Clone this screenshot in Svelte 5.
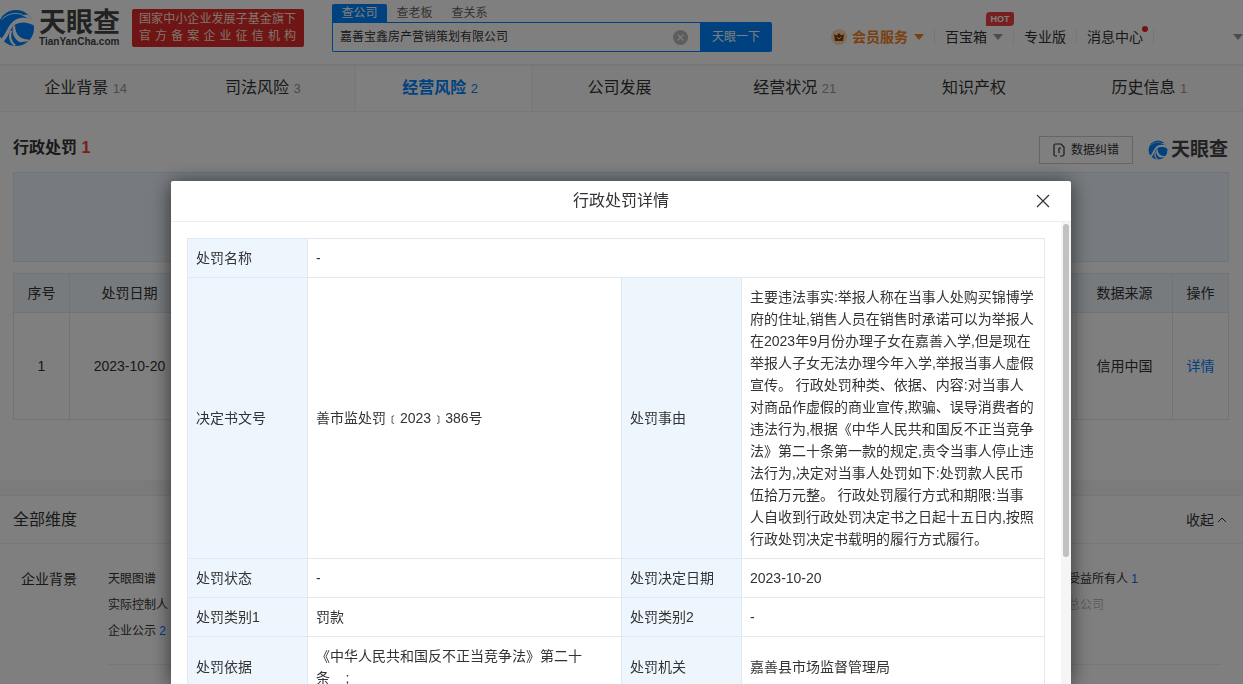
<script>
  let keyword = $state("嘉善宝鑫房产营销策划有限公司");
  let open = $state(true);

  const tabs = [
    { name: "企业背景", count: 14 },
    { name: "司法风险", count: 3 },
    { name: "经营风险", count: 2, active: true },
    { name: "公司发展" },
    { name: "经营状况", count: 21 },
    { name: "知识产权" },
    { name: "历史信息", count: 1 },
  ];

  const reason =
    "主要违法事实:举报人称在当事人处购买锦博学府的住址,销售人员在销售时承诺可以为举报人在2023年9月份办理子女在嘉善入学,但是现在举报人子女无法办理今年入学,举报当事人虚假宣传。 行政处罚种类、依据、内容:对当事人对商品作虚假的商业宣传,欺骗、误导消费者的违法行为,根据《中华人民共和国反不正当竞争法》第二十条第一款的规定,责令当事人停止违法行为,决定对当事人处罚如下:处罚款人民币伍拾万元整。 行政处罚履行方式和期限:当事人自收到行政处罚决定书之日起十五日内,按照行政处罚决定书载明的履行方式履行。";

  const rows = [
    ["决定书文号", "善市监处罚﹝2023﹞386号", "处罚事由", reason],
    ["处罚状态", "-", "处罚决定日期", "2023-10-20"],
    ["处罚类别1", "罚款", "处罚类别2", "-"],
    [
      "处罚依据",
      "《中华人民共和国反不正当竞争法》第二十条\u00a0\u00a0\u00a0\u00a0;",
      "处罚机关",
      "嘉善县市场监督管理局",
    ],
  ];
</script>

{#snippet swirl()}
  <svg class="swirl" viewBox="0 0 40 40" aria-hidden="true">
    <circle cx="20" cy="20" r="19" fill="#0084ff" />
    <g fill="#fff">
      <path d="M40 14C34 9 26 8 20 11 12 15 11 24 4 32l2 3C13 29 13 21 18 17c6-4 14-4 22 1z" />
      <path d="M17 18c-2 7 1 14 7 17l10-1-1-2C25 32 19 27 19 17z" />
      <path d="M14 23c-3 6-1 12 4 16l2-1c-5-4-6-9-4-15z" />
      <path d="M33 6l8 10-3-1C35 11 31 8 26 7c2-1 4-1 7-1z" />
    </g>
    <path fill="none" stroke="#fff" d="M5 11C11 5 19 3 27 6" />
  </svg>
{/snippet}

<div class="page">
  <header class="header">
    <a class="logo" href="#home">
      {@render swirl()}
      <span class="logo-text">
        <b>天眼查</b>
        <small>TianYanCha.com</small>
      </span>
    </a>
    <div class="badge">
      <span>国家中小企业发展子基金旗下</span>
      <span>官方备案企业征信机构</span>
    </div>
    <div class="search">
      <div class="search-tabs">
        <button class="on">查公司</button>
        <button>查老板</button>
        <button>查关系</button>
      </div>
      <div class="search-row">
        <div class="search-box">
          <input type="text" aria-label="搜索" bind:value={keyword} />
          <button class="clear" aria-label="清除" onclick={() => (keyword = "")}>
            <svg viewBox="0 0 16 16" width="15" height="15">
              <circle cx="8" cy="8" r="8" fill="#bbb" />
              <path d="M5 5l6 6M11 5l-6 6" stroke="#fff" stroke-width="1.2" />
            </svg>
          </button>
        </div>
        <button class="go">天眼一下</button>
      </div>
    </div>
    <nav class="nav">
      <a class="vip" href="#vip">
        <svg viewBox="0 0 16 16" width="16" height="16">
          <circle cx="8" cy="8" r="8" fill="#ffd9b0" />
          <path d="M3 5l2.500 1.500L8 4l2.500 2.500L13 5l-1 7H4z" fill="#8a3d0c" />
          <path d="M6 8l2 2 2-2" fill="none" stroke="#ffd9b0" />
        </svg>
        会员服务
        <i class="caret"></i>
      </a>
      <a class="box" href="#box">
        百宝箱
        <i class="caret"></i>
        <span class="hot">HOT</span>
      </a>
      <a class="pro" href="#pro">专业版</a>
      <a class="msg" href="#msg">消息中心<span class="dot"></span></a>
      <i class="caret user"></i>
    </nav>
  </header>

  <nav class="tabs">
    {#each tabs as tab}
      <a href="#tab" class:active={tab.active}>
        {tab.name}
        {#if tab.count}<span>{tab.count}</span>{/if}
      </a>
    {/each}
  </nav>

  <section class="penalty">
    <div class="title">
      <h2>行政处罚 <em>1</em></h2>
      <button class="correct">
        <svg viewBox="0 0 12 14" width="12" height="14" fill="none" stroke="#333" stroke-width="1.200">
          <path d="M4 13H2.500Q1 13 1 11.500V2.500Q1 1 2.500 1H8l3 3v7.500Q11 13 9.500 13H7M6 10V5M6 5L8 5" />
        </svg>
        数据纠错
      </button>
      <span class="logo mini">
        {@render swirl()}
        <b>天眼查</b>
      </span>
    </div>
    <div class="banner"></div>
    <table class="list">
      <thead>
        <tr>
          <th class="no">序号</th>
          <th class="date">处罚日期</th>
          <th></th>
          <th class="from">数据来源</th>
          <th class="act">操作</th>
        </tr>
      </thead>
      <tbody>
        <tr>
          <td>1</td>
          <td>2023-10-20</td>
          <td></td>
          <td>信用中国</td>
          <td><a href="#detail" onclick={() => (open = true)}>详情</a></td>
        </tr>
      </tbody>
    </table>
  </section>

  <section class="all">
    <div class="all-head">
      <h3>全部维度</h3>
      <button>
        收起
        <svg viewBox="0 0 10 6" width="10" height="6" fill="none" stroke="#333">
          <path d="M1 5l4-4 4 4" />
        </svg>
      </button>
    </div>
    <div class="group">
      <span class="group-name">企业背景</span>
      <div class="group-items">
        <ul>
          <li>天眼图谱</li>
          <li>实际控制人</li>
          <li>企业公示 <em>2</em></li>
        </ul>
        <ul class="last">
          <li>受益所有人 <em>1</em></li>
          <li class="none">总公司</li>
        </ul>
      </div>
    </div>
  </section>
</div>

{#if open}
  <div class="mask">
    <div class="modal" role="dialog" aria-label="行政处罚详情">
      <div class="modal-head">
        <h1>行政处罚详情</h1>
        <button class="close" aria-label="关闭" onclick={() => (open = false)}>
          <svg viewBox="0 0 14 14" width="14" height="14" stroke="#333" stroke-width="1.200">
            <path d="M1 1l12 12M13 1L1 13" />
          </svg>
        </button>
      </div>
      <div class="modal-body">
        <div class="content">
          <table class="detail">
            <colgroup>
              <col class="key" />
              <col />
              <col class="key" />
              <col class="wide" />
            </colgroup>
            <tbody>
              <tr>
                <th>处罚名称</th>
                <td colspan="3">-</td>
              </tr>
              {#each rows as [k1, v1, k2, v2]}
                <tr>
                  <th>{k1}</th>
                  <td>{v1}</td>
                  <th>{k2}</th>
                  <td>{v2}</td>
                </tr>
              {/each}
            </tbody>
          </table>
        </div>
        <div class="track"><div class="thumb"></div></div>
      </div>
    </div>
  </div>
{/if}

<style>
  :global(body) {
    overflow: hidden;
    color: #333;
    font: 14px/22px "Liberation Sans", "Noto Sans CJK SC", sans-serif;
  }
  * {
    box-sizing: border-box;
  }
  h1,
  h2,
  h3,
  ul {
    margin: 0;
    padding: 0;
    list-style: none;
  }
  a {
    color: inherit;
    text-decoration: none;
  }
  em {
    font-style: normal;
  }
  button,
  input {
    margin: 0;
    padding: 0;
    border: none;
    background: none;
    color: inherit;
    font: inherit;
  }
  svg {
    flex: none;
    display: block;
  }
  .page {
    height: 100vh;
    overflow: hidden;
    background: #fff;
  }

  .header {
    display: flex;
    height: 66px;
    border-bottom: 2px solid #eee;
  }
  .logo {
    display: flex;
    align-items: center;
    width: 120px;
    height: 56px;
    color: #444;
  }
  .logo .swirl {
    width: 38px;
    height: 38px;
    margin-left: -3px;
    margin-right: 4px;
    border-radius: 50%;
  }
  .logo-text {
    display: flex;
    flex-direction: column;
  }
  .logo-text b {
    font-size: 27px;
    line-height: 28px;
  }
  .logo-text small {
    font-size: 10px;
    font-weight: bold;
    line-height: 10px;
  }
  .badge {
    width: 172px;
    height: 38px;
    margin: 9px 28px 0 12px;
    padding: 2px 8px 2px 7px;
    border-radius: 2px;
    background: #e02a2a;
    color: #ffe9d6;
    font-size: 12px;
    line-height: 17px;
  }
  .badge span {
    display: block;
    white-space: nowrap;
    text-align: justify;
    text-align-last: justify;
  }
  .search {
    width: 440px;
    padding-top: 4px;
    font-size: 12px;
  }
  .search-tabs {
    display: flex;
    height: 18px;
    line-height: 18px;
    color: #666;
  }
  .search-tabs button {
    width: 55px;
  }
  .search-tabs .on {
    border-radius: 2px 2px 0 0;
    background: #0084ff;
    color: #fff;
  }
  .search-row {
    display: flex;
    height: 30px;
  }
  .search-box {
    flex: 1;
    display: flex;
    align-items: center;
    padding: 0 12px 0 7px;
    border: 1px solid #0084ff;
    border-right: none;
    border-radius: 0 0 0 2px;
  }
  .search-box input {
    flex: 1;
    outline: none;
  }
  .go {
    width: 72px;
    border-radius: 0 2px 2px 0;
    background: #0084ff;
    color: #fff;
  }
  .nav {
    display: flex;
    align-items: center;
    height: 74px;
    margin-left: auto;
  }
  .nav a {
    position: relative;
    display: flex;
    align-items: center;
    height: 16px;
    padding-right: 10px;
    border-right: 1px solid #eee;
  }
  .nav a + a {
    padding-left: 10px;
  }
  .nav .vip {
    color: #f5801f;
    font-weight: bold;
  }
  .vip svg {
    margin-right: 5px;
  }
  .caret {
    margin-left: 6px;
    border: 5px solid transparent;
    border-top: 6px solid #999;
    border-bottom: none;
  }
  .vip .caret {
    border-top-color: #f5801f;
  }
  .caret.user {
    margin-left: 79px;
  }
  .hot {
    position: absolute;
    top: -17px;
    right: -1px;
    width: 28px;
    border-radius: 4px 2px 4px 0;
    background: #f04040;
    color: #fff;
    font-size: 9px;
    font-weight: bold;
    line-height: 14px;
    text-align: center;
  }
  .dot {
    position: absolute;
    top: -3px;
    right: 5px;
    width: 6px;
    height: 6px;
    border-radius: 50%;
    background: #f02020;
  }

  .tabs {
    display: grid;
    grid-template-columns: repeat(7, 1fr);
    height: 46px;
    padding-right: 2px;
    border-bottom: 1px solid #eee;
    background: #fafafa;
    font-size: 16px;
    line-height: 44px;
    text-align: center;
  }
  .tabs a {
    padding-right: 2px;
  }
  .tabs a.active {
    border: solid #eee;
    border-width: 0 1px;
    background: #fff;
    color: #0084ff;
    font-weight: bold;
  }
  .tabs span {
    margin-right: 4px;
    color: #999;
    font-size: 13px;
    font-weight: normal;
  }
  .tabs .active span {
    color: #0084ff;
  }

  .penalty {
    height: 368px;
    padding: 24px 14px 0 13px;
  }
  .title {
    display: flex;
    align-items: center;
    height: 28px;
    margin-bottom: 8px;
  }
  .title h2 {
    margin-right: auto;
    padding-bottom: 4px;
    font-size: 16px;
    line-height: 22px;
  }
  .title em {
    color: #f04040;
  }
  .correct {
    display: flex;
    align-items: center;
    justify-content: center;
    gap: 6px;
    width: 94px;
    height: 28px;
    border: 1px solid #ccc;
    font-size: 12px;
  }
  .mini {
    width: 81px;
    height: 24px;
    margin-left: 15px;
    font-size: 19px;
  }
  .mini.logo .swirl {
    width: 20px;
    height: 20px;
    margin: 0 3px 0 0;
  }
  .banner {
    height: 90px;
    margin-bottom: 11px;
    border: 1px solid #dfe9f2;
    background: #eef5fc;
  }
  table {
    width: 100%;
    border-collapse: collapse;
    table-layout: fixed;
  }
  th {
    background: #eef6fd;
    font-weight: normal;
  }
  th,
  td {
    padding: 8px;
    border: 1px solid #e0e9f1;
  }
  .list {
    text-align: center;
  }
  .list td {
    height: 107px;
  }
  .list a {
    color: #0084ff;
  }
  .no,
  .act {
    width: 56px;
  }
  .date {
    width: 120px;
  }
  .from {
    width: 96px;
  }

  .all {
    border-top: 15px solid #f6f6f6;
  }
  .all-head {
    display: flex;
    align-items: center;
    justify-content: space-between;
    height: 49px;
    padding: 0 16px 0 13px;
    border-top: 1px solid #eee;
    border-bottom: 1px solid #eee;
  }
  .all-head h3 {
    font-size: 16px;
    font-weight: normal;
  }
  .all-head button {
    display: flex;
    align-items: center;
    gap: 3px;
  }
  .group {
    display: flex;
    padding: 22px 22px 0 21px;
  }
  .group-name {
    width: 87px;
    line-height: 26px;
  }
  .group-items {
    flex: 1;
    display: flex;
    justify-content: space-between;
    padding-bottom: 20px;
    border-bottom: 1px solid #eee;
    font-size: 12px;
    line-height: 26px;
  }
  .group-items em {
    color: #0a6cff;
  }
  .last {
    width: 153px;
  }
  .none {
    color: #bbb;
  }

  .mask {
    position: fixed;
    inset: 0;
    display: flex;
    justify-content: center;
    padding: 181px 1px 0 0;
    overflow: hidden;
    background: rgba(0, 0, 0, 0.5);
  }
  .modal {
    display: flex;
    flex-direction: column;
    width: 900px;
    border-radius: 2px 2px 0 0;
    background: #fff;
    box-shadow: 0 2px 20px rgba(0, 0, 0, 0.6);
  }
  .modal-head {
    flex: none;
    display: flex;
    align-items: center;
    height: 41px;
    padding: 0 21px;
    border-bottom: 1px solid #eee;
  }
  .modal-head h1 {
    flex: 1;
    padding-left: 14px;
    font-size: 16px;
    font-weight: normal;
    text-align: center;
  }
  .modal-body {
    flex: 1;
    display: flex;
    min-height: 0;
  }
  .content {
    flex: 1;
    padding: 16px;
    overflow: hidden;
  }
  .key {
    width: 120px;
  }
  .wide {
    width: 303px;
  }
  .detail th {
    text-align: left;
  }
  .track {
    width: 10px;
    padding: 2px;
    background: #f5f5f5;
  }
  .thumb {
    height: 333px;
    border-radius: 3px;
    background: #c1c1c1;
  }
</style>
